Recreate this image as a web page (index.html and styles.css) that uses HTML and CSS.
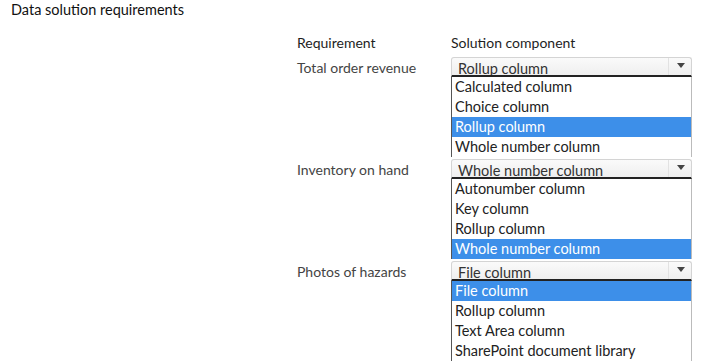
FILE: index.html
```html
<!DOCTYPE html>
<html lang="en">
<head>
    <meta charset="UTF-8">
    <meta name="viewport" content="width=device-width, initial-scale=1.0">
    <title>Data solution requirements</title>
    <link rel="stylesheet" href="styles.css">
</head>
<body>
    <div class="page">
        <h1 class="title">Data solution requirements</h1>

        <div class="answer-grid">
            <div class="head">Requirement</div>
            <div class="head">Solution component</div>

            <!-- Total order revenue -->
            <div class="label">Total order revenue</div>
            <div class="picker">
                <div class="picker-box">
                    <span class="value">Rollup column</span>
                    <span class="arrow"></span>
                </div>
                <ul class="options">
                    <li>Calculated column</li>
                    <li>Choice column</li>
                    <li class="selected">Rollup column</li>
                    <li>Whole number column</li>
                </ul>
            </div>

            <!-- Inventory on hand -->
            <div class="label">Inventory on hand</div>
            <div class="picker">
                <div class="picker-box">
                    <span class="value">Whole number column</span>
                    <span class="arrow"></span>
                </div>
                <ul class="options">
                    <li>Autonumber column</li>
                    <li>Key column</li>
                    <li>Rollup column</li>
                    <li class="selected">Whole number column</li>
                </ul>
            </div>

            <!-- Photos of hazards -->
            <div class="label">Photos of hazards</div>
            <div class="picker">
                <div class="picker-box">
                    <span class="value">File column</span>
                    <span class="arrow"></span>
                </div>
                <ul class="options">
                    <li class="selected">File column</li>
                    <li>Rollup column</li>
                    <li>Text Area column</li>
                    <li>SharePoint document library</li>
                </ul>
            </div>
        </div>
    </div>
</body>
</html>
```

FILE: styles.css
```css
body {
    margin: 0;
    background-color: #ffffff;
    font-family: Lato, "Open Sans", sans-serif;
    color: #333;
}
.page {
    padding: 1px 11px 0;
}
.title {
    margin: 0;
    font-size: 14.5px;
    line-height: 18px;
    font-weight: normal;
    color: #111;
}
.answer-grid {
    display: grid;
    grid-template-columns: 154px 241px;
    row-gap: 2px;
    margin-left: 286px;
    margin-top: 14px;
}
.head {
    font-size: 14px;
    line-height: 20px;
    color: #1e1e1e;
    margin-bottom: 2px;
}
.label {
    font-size: 14px;
    line-height: 20px;
    color: #444;
    padding-top: 1px;
}
.picker {
    display: flex;
    flex-direction: column;
}
.picker-box {
    display: flex;
    height: 17px;
    border: 1px solid #d4d4d4;
    border-bottom: 2px solid #222;
    border-radius: 3px 3px 0 0;
    background: linear-gradient(#fafafa, #efefef);
    overflow: hidden;
}
.value {
    flex: 1;
    padding-left: 6px;
    font-size: 14.5px;
    line-height: 21px;
    color: #333;
    border-right: 1px solid #e2e2e2;
}
.arrow {
    width: 22px;
    position: relative;
}
.arrow::after {
    content: "";
    position: absolute;
    left: 8px;
    top: 5px;
    border-left: 4px solid transparent;
    border-right: 4px solid transparent;
    border-top: 5px solid #444;
}
.options {
    list-style: none;
    margin: 0;
    padding: 0;
    border-left: 1px solid #555;
    border-right: 1px solid #bbb;
}
.options li {
    height: 20px;
    line-height: 20px;
    padding-left: 3px;
    font-size: 14.5px;
    color: #222;
}
.options li.selected {
    background-color: #3d8fe9;
    color: #ffffff;
}
```
